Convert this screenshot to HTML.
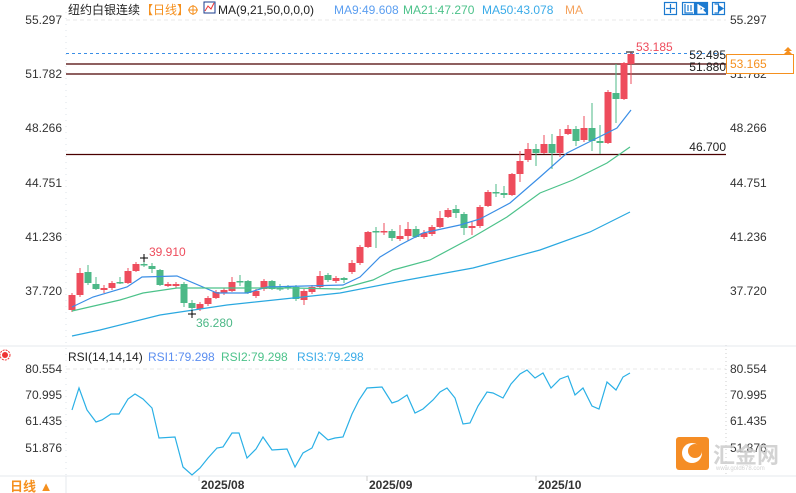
<!DOCTYPE html><html><head><meta charset="utf-8"><style>
body{margin:0;width:796px;height:493px;background:#fff;overflow:hidden;font-family:"Liberation Sans","Noto Sans CJK SC",sans-serif}
svg{position:absolute;left:0;top:0}
</style></head><body>
<svg width="796" height="493" viewBox="0 0 796 493" font-family="Liberation Sans, Noto Sans CJK SC, sans-serif">
<line x1="66" y1="12" x2="66" y2="476" stroke="#dde3ea" stroke-dasharray="1,5"/>
<line x1="66" y1="20" x2="726" y2="20" stroke="#e8e8e8" stroke-dasharray="4,3"/>
<line x1="66" y1="369" x2="726" y2="369" stroke="#e8e8e8" stroke-dasharray="4,3"/>
<line x1="726" y1="345" x2="726" y2="476" stroke="#ccc" stroke-dasharray="1,3"/>
<line x1="0" y1="346" x2="796" y2="346" stroke="#e6e9ee"/>
<line x1="0" y1="476" x2="796" y2="476" stroke="#e6e9ee"/>
<line x1="66" y1="476" x2="66" y2="493" stroke="#e6e9ee"/>
<g stroke="#ccc"><line x1="199" y1="476" x2="199" y2="481"/><line x1="367" y1="476" x2="367" y2="481"/><line x1="536" y1="476" x2="536" y2="481"/></g>
<g font-size="12" fill="#333" text-anchor="end">
<text x="62" y="24">55.297</text><text x="62" y="78">51.782</text><text x="62" y="132">48.266</text><text x="62" y="187">44.751</text><text x="62" y="241">41.236</text><text x="62" y="295">37.720</text>
<text x="62" y="373">80.554</text><text x="62" y="399">70.995</text><text x="62" y="425">61.435</text><text x="62" y="452">51.876</text>
</g>
<g font-size="12" fill="#333">
<text x="730" y="24">55.297</text><text x="730" y="78">51.782</text><text x="730" y="132">48.266</text><text x="730" y="187">44.751</text><text x="730" y="241">41.236</text><text x="730" y="295">37.720</text>
<text x="730" y="373">80.554</text><text x="730" y="399">70.995</text><text x="730" y="425">61.435</text><text x="730" y="452">51.876</text>
</g>
<line x1="66" y1="53.5" x2="726" y2="53.5" stroke="#3a8ee6" stroke-dasharray="3,3"/>
<g stroke="#4a0000" stroke-width="1.3"><line x1="66" y1="64" x2="726" y2="64"/><line x1="66" y1="74" x2="726" y2="74"/><line x1="66" y1="154.5" x2="726" y2="154.5"/></g>
<g font-size="12" fill="#222" text-anchor="end"><text x="726" y="59">52.495</text><text x="726" y="71">51.880</text><text x="726" y="151">46.700</text></g>
<rect x="726.5" y="54.5" width="67" height="19" fill="#fff" stroke="#f5901e"/>
<text x="730" y="68" font-size="12" fill="#f5901e">53.165</text>
<path d="M784 51 l4 -4 l4 4 z M784 54 l4 -4 l4 4 z" fill="#f5901e"/>
<g id="c"></g>
<polyline fill="none" stroke="#3a8ee6" stroke-width="1.2" points="72,307 93,297 127,287 142,277 177,276 217,293 247,293 267,287 343,285 360,277 380,257 400,245 423,233 460,225 480,219 510,203 540,177 567,153 593,140 617,128 631,110"/>
<polyline fill="none" stroke="#4cc28a" stroke-width="1.2" points="72,311 120,300 143,293 177,288 217,288 293,288 340,289 373,280 393,270 430,260 473,237 507,217 540,193 573,180 607,163 630,147"/>
<polyline fill="none" stroke="#2aa8e0" stroke-width="1.2" points="72,336 100,330 160,315 227,305 293,298 340,293 407,280 473,268 540,250 590,232 630,212"/>
<polyline fill="none" stroke="#2ab0e6" stroke-width="1.2" points="72,410 79,388 87,410 96,422 102,420 111,414 119,414 128,399 135,394 143,399 152,408 159,438 175,437 183,467 192,475 200,468 208,458 217,448 223,447 232,433 239,433 247,458 256,449 263,437 272,450 287,449 295,467 303,453 312,448 319,432 328,440 335,438 343,437 352,414 359,400 367,388 382,387 392,403 398,401 407,395 415,413 423,409 433,400 440,392 447,388 455,398 463,424 470,423 478,406 487,392 493,393 503,398 511,384 520,374 527,370 535,378 543,373 551,388 560,379 568,376 575,395 583,388 592,406 599,409 607,382 616,390 623,377 630,373"/>
<g stroke="#000" stroke-width="1"><path d="M140 258h8M144 254v8M188 314h8M192 310v8M626 52h8"/></g>
<text x="149" y="256" font-size="12" fill="#ee4c5c">39.910</text>
<text x="196" y="327" font-size="12" fill="#4cb887">36.280</text>
<text x="636" y="51" font-size="12" fill="#ee4c5c">53.185</text>
<g font-size="12">
<text x="68" y="14" fill="#222">纽约白银连续</text><text x="141" y="14" fill="#f5901e">【日线】</text>
<circle cx="193" cy="10" r="4" fill="none" stroke="#f5901e"/><path d="M188 10h10M193 5v10" stroke="#f5901e"/>
<rect x="204" y="2" width="11" height="11" fill="#fff" stroke="#1a3b8c"/><path d="M205 11l3-5 3 3 3-6" stroke="#e33" fill="none"/>
<text x="218" y="14" fill="#222">MA(9,21,50,0,0,0)</text>
<text x="334" y="14" fill="#5b9ef0">MA9:49.608</text><text x="403" y="14" fill="#4cc28a">MA21:47.270</text><text x="482" y="14" fill="#3aabe8">MA50:43.078</text><text x="565" y="14" fill="#f5a25c">MA</text>
<text x="68" y="361" fill="#222">RSI(14,14,14)</text><text x="148" y="361" fill="#5b8ef0">RSI1:79.298</text><text x="221" y="361" fill="#4cc28a">RSI2:79.298</text><text x="297" y="361" fill="#3aabe8">RSI3:79.298</text>
</g>
<circle cx="5" cy="355" r="3" fill="#e33"/><circle cx="5" cy="355" r="5" fill="none" stroke="#e33" stroke-dasharray="2,1"/>
<g stroke="#1c7ad0" stroke-width="1.2">
<rect x="664.5" y="2.5" width="12" height="12" fill="#fff"/><path d="M670.5 4v9M666 8.5h9" fill="none"/>
<rect x="682.5" y="2.5" width="12" height="12" fill="#fff"/><path d="M685 4v9h8M688 5v6M691 5v6" fill="none"/>
<rect x="695.5" y="2.5" width="12" height="12" fill="#1c7ad0"/><path d="M698 4v9h8M700 6l4 2.5-4 2.5z" stroke="#fff" fill="#fff"/>
<rect x="712.5" y="2.5" width="12" height="12" fill="#fff"/><path d="M714.5 4h4v9h-4" fill="none"/><path d="M719 6l4 2.5-4 2.5z" fill="#1c7ad0"/>
</g>
<g font-size="12" font-weight="bold" fill="#333"><text x="201" y="489">2025/08</text><text x="369" y="489">2025/09</text><text x="538" y="489">2025/10</text></g>
<text x="10" y="491" font-size="13" font-weight="bold" fill="#f5901e">日线 ▲</text>
<g opacity="0.85"><rect x="676" y="437" width="33" height="33" rx="3" fill="#f47a00"/><circle cx="692" cy="453" r="10" fill="#fff"/><circle cx="695" cy="451" r="7" fill="#f47a00"/>
<text x="713" y="463" font-size="22" font-weight="bold" fill="#ccc">汇金网</text><text x="716" y="470" font-size="6" fill="#ccc">www.gold678.com</text></g>
</svg>
<script>
var d=[[72,295,310,293,312,1],[80,273,295,268,297,1],[88,272,283,265,285,0],[96,284,289,277,290,0],[104,288,290,285,293,1],[112,283,288,281,290,1],[120,282,283,277,284,0],[128,271,283,268,284,1],[136,264,271,262,272,1],[144,264,265,258,267,0],[152,266,269,263,273,0],[160,270,285,269,286,0],[168,284,286,282,287,1],[176,284,286,282,288,1],[184,284,303,282,307,0],[192,303,308,300,315,0],[200,304,309,302,311,1],[208,298,304,296,306,1],[216,292,298,290,299,1],[224,290,293,288,295,1],[232,282,291,277,292,1],[240,281,282,275,286,0],[248,281,293,280,294,0],[256,291,296,289,298,1],[264,281,289,279,291,1],[272,281,289,280,290,0],[280,288,289,284,291,0],[288,287,288,285,290,0],[296,287,299,285,301,0],[304,291,300,289,305,1],[312,287,292,285,294,1],[320,276,287,271,288,1],[328,275,280,273,282,0],[336,278,281,276,283,1],[344,278,280,277,283,0],[352,263,272,260,274,1],[360,247,263,245,265,1],[368,232,247,231,248,1],[376,231,232,227,248,0],[384,231,232,223,235,1],[392,231,238,229,241,0],[400,236,239,225,241,1],[408,229,236,222,241,1],[416,229,237,226,238,0],[424,233,237,230,239,1],[432,227,234,225,236,1],[440,218,227,211,228,1],[448,210,217,208,218,1],[456,209,213,205,218,0],[464,214,228,212,235,0],[472,226,228,222,235,1],[480,207,226,205,228,1],[488,192,206,190,207,1],[496,192,193,184,197,0],[504,193,195,186,198,0],[512,174,195,173,196,1],[520,161,174,151,182,1],[528,149,160,143,162,1],[536,149,153,144,166,0],[544,144,153,135,154,1],[552,144,153,134,169,0],[560,136,153,129,157,1],[568,129,134,125,135,1],[576,129,141,126,146,0],[584,128,140,116,142,1],[592,128,141,103,151,0],[600,141,143,125,154,0],[608,92,143,90,144,1],[616,93,99,64,123,0],[624,63,99,62,100,1],[631,54,64,52,84,1]];
var s='';d.forEach(function(c){var col=c[5]?'#ee4c5c':'#4cb887';s+='<line x1="'+c[0]+'" x2="'+c[0]+'" y1="'+c[3]+'" y2="'+c[4]+'" stroke="'+col+'"/><rect x="'+(c[0]-3.5)+'" y="'+c[1]+'" width="7" height="'+Math.max(1.5,c[2]-c[1])+'" fill="'+col+'"/>';});
document.getElementById('c').innerHTML=s;
</script>
</body></html>
